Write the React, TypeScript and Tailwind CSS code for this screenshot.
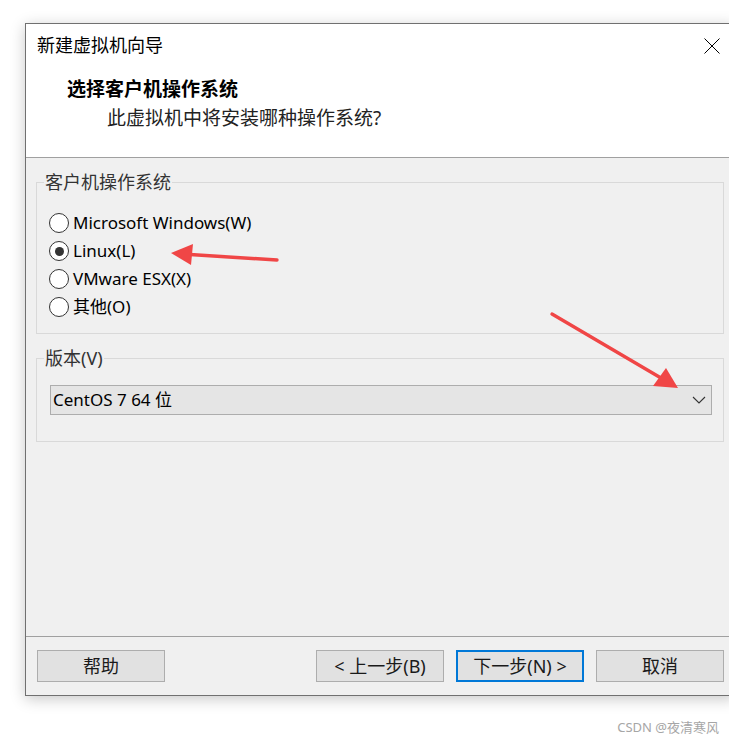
import React from 'react';

type RadioProps = { label: React.ReactNode; checked?: boolean };

function Radio({ label, checked }: RadioProps) {
  return (
    <label className="flex items-center gap-[4px] h-[28px]">
      <span className="w-5 h-5 shrink-0 rounded-full border border-[#333] bg-white flex items-center justify-center">
        {checked && <span className="w-[9px] h-[9px] rounded-full bg-[#333]" />}
      </span>
      <span className="text-[17px] leading-[20px] text-black">{label}</span>
    </label>
  );
}

function Button({ children, primary }: { children: React.ReactNode; primary?: boolean }) {
  return (
    <button
      className={
        primary
          ? 'w-[128px] h-[32px] border-2 border-[#0078d7] bg-[#e1e1e1] text-[18px] leading-none text-[#1a1a1a] flex items-center justify-center'
          : 'w-[128px] h-[32px] border border-[#adadad] bg-[#e1e1e1] text-[18px] leading-none text-[#1a1a1a] flex items-center justify-center'
      }
    >
      {children}
    </button>
  );
}

function Arrows() {
  return (
    <svg className="absolute inset-0 pointer-events-none" width="729" height="741" viewBox="0 0 729 741">
      <line x1="277" y1="260" x2="190" y2="254.5" stroke="#f04646" strokeWidth="3.4" strokeLinecap="round" />
      <polygon points="171,253 193,244 191,265" fill="#f04646" />
      <line x1="552" y1="314" x2="661" y2="378" stroke="#f04646" strokeWidth="3.4" strokeLinecap="round" />
      <polygon points="678,388 653,386 666,368" fill="#f04646" />
    </svg>
  );
}

export default function App() {
  return (
    <div className="relative w-[729px] h-[741px] overflow-hidden bg-white pt-[23px] pl-[25px] font-['Noto_Sans','Noto_Sans_CJK_SC',sans-serif]">
      <div className="w-[710px] h-[673px] border border-[#707070] bg-[#f0f0f0] flex flex-col shadow-[0_3px_14px_rgba(0,0,0,0.22)]">
        {/* header */}
        <div className="h-[133px] bg-white border-b border-[#a0a0a0] box-content">
          <div className="flex justify-between items-start pl-[11px] pr-[14px] pt-[9px]">
            <div className="text-[18px] leading-[24px] text-black">新建虚拟机向导</div>
            <svg className="mt-[5px]" width="16" height="16" viewBox="0 0 16 16">
              <path d="M0.5 0.5 L15.5 15.5 M15.5 0.5 L0.5 15.5" stroke="#000" strokeWidth="1" />
            </svg>
          </div>
          <div className="pl-[41px] mt-[20px] text-[19px] leading-[24px] font-bold text-black">选择客户机操作系统</div>
          <div className="pl-[81px] mt-[5px] text-[19px] leading-[24px] text-[#222]">此虚拟机中将安装哪种操作系统?</div>
        </div>

        {/* body */}
        <div className="flex-1 px-[10px] pt-[14px] border-b border-[#a0a0a0]">
          <fieldset className="border border-[#d9d9d9]">
            <legend className="ml-[7px] px-[1px] text-[18px] leading-[20px] text-[#333]">客户机操作系统</legend>
            <div className="pl-[12px] pt-[17px] pb-[12px]">
              <Radio label="Microsoft Windows(W)" />
              <Radio label="Linux(L)" checked />
              <Radio label="VMware ESX(X)" />
              <Radio label="其他(O)" />
            </div>
          </fieldset>

          <fieldset className="mt-[14px] border border-[#d9d9d9]">
            <legend className="ml-[7px] px-[1px] text-[18px] leading-[20px] text-[#333]">版本(V)</legend>
            <div className="pl-[13px] pr-[11px] pt-[17px] pb-[26px]">
              <div className="h-[30px] border border-[#adadad] bg-[#e5e5e5] flex items-center justify-between pl-[2px] pr-[5px]">
                <span className="text-[17px] leading-[20px] text-black">CentOS 7 64 位</span>
                <svg width="14" height="8" viewBox="0 0 14 8">
                  <path d="M1 1 L7 7 L13 1" fill="none" stroke="#333" strokeWidth="1.1" />
                </svg>
              </div>
            </div>
          </fieldset>
        </div>

        {/* footer */}
        <div className="h-[58px] flex justify-between items-start pl-[11px] pr-[10px] pt-[13px]">
          <Button>帮助</Button>
          <div className="flex gap-[12px]">
            <Button>&lt; 上一步(B)</Button>
            <Button primary>下一步(N) &gt;</Button>
            <Button>取消</Button>
          </div>
        </div>
      </div>

      <div className="w-[704px] flex justify-end mt-[23px] pr-[10px] text-[13px] leading-[16px] text-[#a6a6a6]">
        CSDN @夜清寒风
      </div>

      <Arrows />
    </div>
  );
}
